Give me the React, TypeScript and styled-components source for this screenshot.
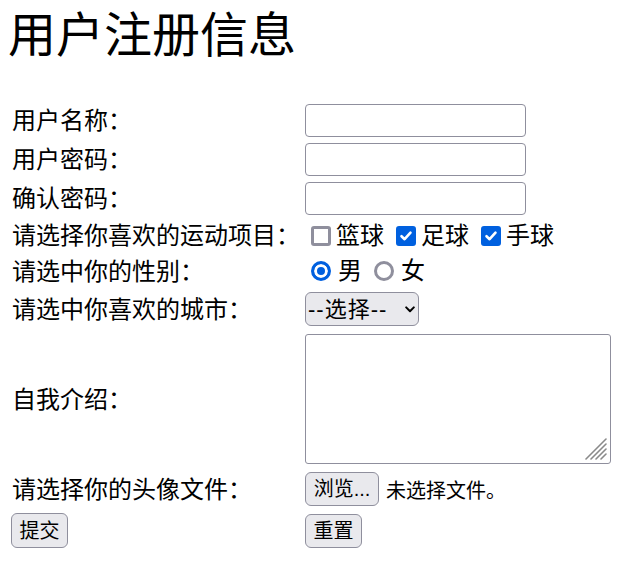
import React from "react";
import styled, { createGlobalStyle } from "styled-components";

const GlobalStyle = createGlobalStyle`
  html, body { margin: 0; padding: 0; background: #fff; }
  body {
    font-family: "Liberation Serif", "Noto Sans CJK SC", serif;
    color: #000;
  }
`;

const Page = styled.div`
  padding: 12px 8px 0 8px;
`;

const Title = styled.h1`
  margin: 0 0 44px 0;
  font-size: 48px;
  line-height: 48px;
  font-weight: normal;
`;

const Form = styled.form`
  display: grid;
  grid-template-columns: 294px 1fr;
  row-gap: 6px;
  align-items: center;
  margin-left: 3px;
`;

const Label = styled.label`
  font-size: 24px;
  line-height: 28px;
  padding: 1px 0 0 1px;
  white-space: nowrap;
`;

const Field = styled.div<{ $h?: number; $top?: number }>`
  display: flex;
  align-items: center;
  min-height: ${(p) => (p.$h ? `${p.$h}px` : "auto")};
  margin-top: ${(p) => (p.$top ? `${p.$top}px` : "0")};
`;

const TextInput = styled.input`
  box-sizing: border-box;
  width: 221px;
  height: 33px;
  border: 1.5px solid #8f8f9d;
  border-radius: 4px;
  background: #fff;
  padding: 0 4px;
  font: 20px "Liberation Sans", "Noto Sans CJK SC", sans-serif;
  outline: none;
`;

const Option = styled.label`
  display: inline-flex;
  align-items: center;
  font-size: 24px;
  line-height: 28px;
  margin-right: 6px;
`;

const Check = styled.span<{ $checked?: boolean }>`
  box-sizing: border-box;
  width: 20px;
  height: 20px;
  margin: 0 5px 0 6px;
  border-radius: 3px;
  border: 3px solid ${(p) => (p.$checked ? "#0060df" : "#8f8f9d")};
  background: ${(p) => (p.$checked ? "#0060df" : "#fff")};
  display: inline-flex;
  align-items: center;
  justify-content: center;
`;

const Radio = styled.span<{ $checked?: boolean }>`
  box-sizing: border-box;
  width: 20px;
  height: 20px;
  margin: 0 7px 0 6px;
  border-radius: 50%;
  border: 3px solid ${(p) => (p.$checked ? "#0060df" : "#8f8f9d")};
  background: ${(p) => (p.$checked ? "#0060df" : "#fff")};
  box-shadow: ${(p) => (p.$checked ? "inset 0 0 0 3px #fff" : "none")};
`;

const SelectWrap = styled.span`
  position: relative;
  display: inline-block;
`;

const Select = styled.select`
  appearance: none;
  -webkit-appearance: none;
  box-sizing: border-box;
  width: 114px;
  height: 34px;
  padding: 0 0 0 2px;
  border: 1.5px solid #8f8f9d;
  border-radius: 6px;
  background: #e9e9ed;
  color: #000;
  font-family: "Liberation Sans", "Noto Sans CJK SC", sans-serif;
  font-size: 22px;
  letter-spacing: 1px;
  outline: none;
`;

const Chevron = styled.svg`
  position: absolute;
  right: 4px;
  top: 14px;
  pointer-events: none;
`;

const AreaWrap = styled.div`
  position: relative;
  margin: 2px 0;
`;

const TextArea = styled.textarea`
  display: block;
  box-sizing: border-box;
  width: 306px;
  height: 130px;
  border: 1.5px solid #8f8f9d;
  border-radius: 3px;
  background: #fff;
  resize: none;
  outline: none;
`;

const Grip = styled.svg`
  position: absolute;
  right: 4px;
  bottom: 4px;
  pointer-events: none;
`;

const Button = styled.button<{ $w: number; $h?: number }>`
  box-sizing: border-box;
  width: ${(p) => p.$w}px;
  height: ${(p) => p.$h ?? 34}px;
  padding: 0;
  border: 1.5px solid #8f8f9d;
  border-radius: 6px;
  background: #e9e9ed;
  color: #000;
  font: 20px "Liberation Sans", "Noto Sans CJK SC", sans-serif;
  line-height: 1;
`;

const FileNote = styled.span`
  margin-left: 7px;
  font: 20px "Liberation Sans", "Noto Sans CJK SC", sans-serif;
`;

const CheckMark = () => (
  <svg width="14" height="14" viewBox="0 0 14 14">
    <polyline
      points="2.5,7.2 5.6,10.2 11.5,3.6"
      fill="none"
      stroke="#fff"
      strokeWidth="2.6"
      strokeLinecap="round"
      strokeLinejoin="round"
    />
  </svg>
);

export default function App() {
  return (
    <>
      <GlobalStyle />
      <Page>
        <Title>用户注册信息</Title>
        <Form onSubmit={(e) => e.preventDefault()}>
          <Label>用户名称：</Label>
          <Field>
            <TextInput type="text" />
          </Field>

          <Label>用户密码：</Label>
          <Field>
            <TextInput type="password" />
          </Field>

          <Label>确认密码：</Label>
          <Field>
            <TextInput type="password" />
          </Field>

          <Label>请选择你喜欢的运动项目：</Label>
          <Field $h={29}>
            <Option>
              <Check />
              篮球
            </Option>
            <Option>
              <Check $checked>
                <CheckMark />
              </Check>
              足球
            </Option>
            <Option>
              <Check $checked>
                <CheckMark />
              </Check>
              手球
            </Option>
          </Field>

          <Label>请选中你的性别：</Label>
          <Field $h={30}>
            <Option>
              <Radio $checked />男
            </Option>
            <Option>
              <Radio />女
            </Option>
          </Field>

          <Label>请选中你喜欢的城市：</Label>
          <Field>
            <SelectWrap>
              <Select defaultValue="">
                <option value="">--选择--</option>
              </Select>
              <Chevron width="10" height="7" viewBox="0 0 10 7">
                <polyline
                  points="1.2,1.4 5,5.2 8.8,1.4"
                  fill="none"
                  stroke="#000"
                  strokeWidth="2"
                  strokeLinecap="round"
                  strokeLinejoin="round"
                />
              </Chevron>
            </SelectWrap>
          </Field>

          <Label>自我介绍：</Label>
          <Field>
            <AreaWrap>
              <TextArea />
              <Grip width="22" height="22" viewBox="0 0 22 22">
                <g stroke="#8a8a8a" strokeWidth="1.6" strokeLinecap="round">
                  <line x1="1" y1="21" x2="21" y2="1" />
                  <line x1="6" y1="21" x2="21" y2="6" />
                  <line x1="11" y1="21" x2="21" y2="11" />
                  <line x1="16" y1="21" x2="21" y2="16" />
                </g>
              </Grip>
            </AreaWrap>
          </Field>

          <Label>请选择你的头像文件：</Label>
          <Field>
            <Button type="button" $w={74}>
              浏览...
            </Button>
            <FileNote>未选择文件。</FileNote>
          </Field>

          <Field $top={1}>
            <Button type="submit" $w={57} $h={35}>
              提交
            </Button>
          </Field>
          <Field $top={1}>
            <Button type="reset" $w={57}>
              重置
            </Button>
          </Field>
        </Form>
      </Page>
    </>
  );
}
